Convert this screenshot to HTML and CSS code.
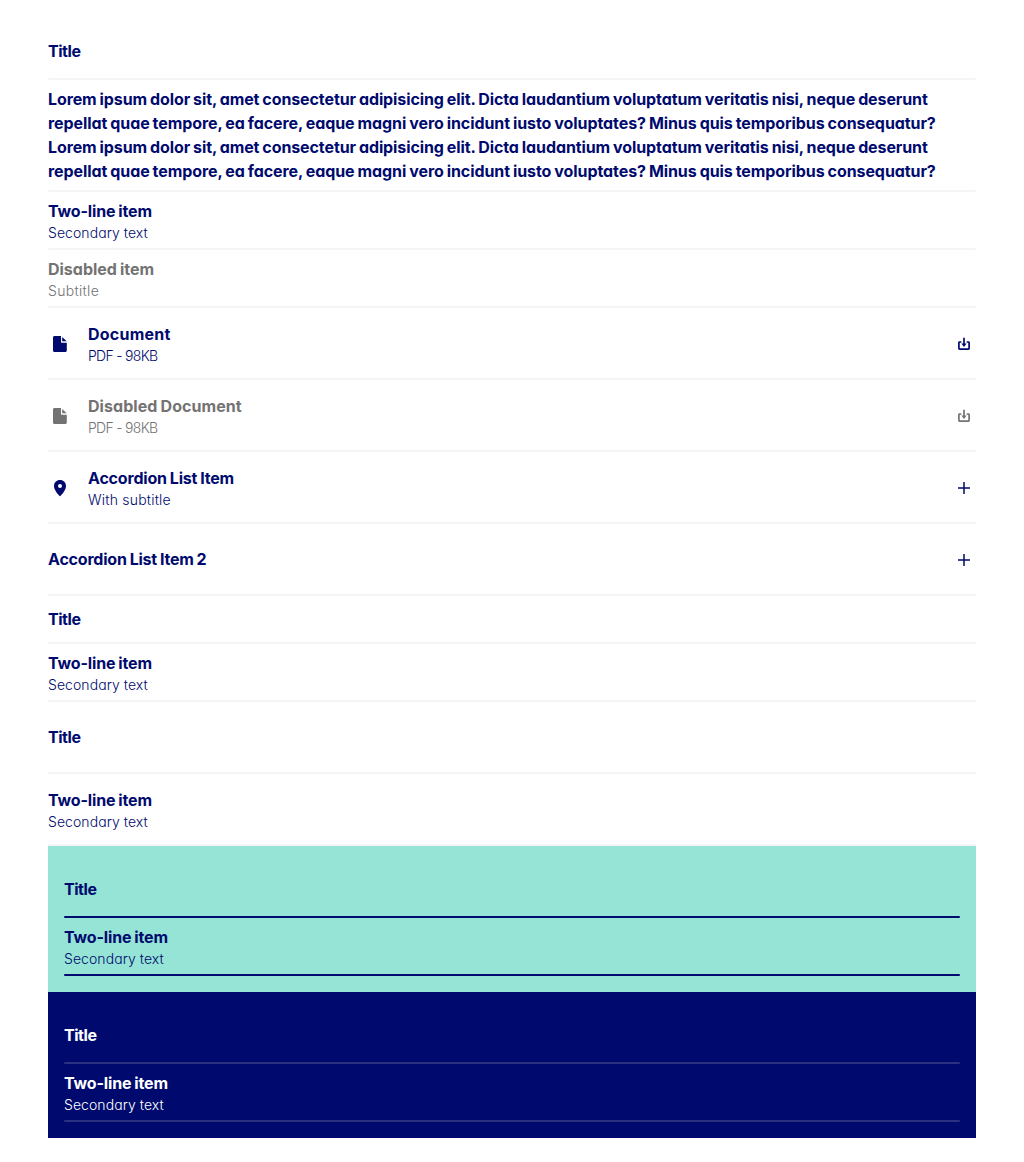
FILE: index.html
```
<!DOCTYPE html>
<html lang="en">
<head>
<meta charset="utf-8">
<title>List</title>
<link rel="stylesheet" href="styles.css">
</head>
<body>
<svg class="sprite" aria-hidden="true">
  <symbol id="file" viewBox="0 0 24 24"><path d="M6.500 4H13v5.700c0 .7.4 1.100 1.100 1.100h4.700v7.700c0 .9-.6 1.500-1.500 1.500H6.500C5.600 20 5 19.400 5 18.500v-13C5 4.600 5.600 4 6.500 4Z"/><path d="M14.200 5v4.300h4.500Z"/></symbol>
  <symbol id="pin" viewBox="0 0 24 24"><path fill-rule="evenodd" d="M12 4c-3.400 0-6 2.600-6 5.900 0 3.700 3.600 8.300 6 10.300 2.400-2 6-6.600 6-10.300C18 6.600 15.400 4 12 4Zm0 4a2 2 0 1 1 0 4 2 2 0 0 1 0-4Z"/></symbol>
  <symbol id="download" viewBox="0 0 24 24"><path class="stroke" d="M8.700 10H7.500q-.6 0-.6.6v6q0 .6.6.6h9q.6 0 .6-.6v-6q0-.6-.6-.6H15.300M12 6.300v6.500"/><path d="M9.400 11.600h5.200L12 15Z"/></symbol>
  <symbol id="plus" viewBox="0 0 24 24"><path d="M11.250 6h1.500v5.250H18v1.500h-5.250V18h-1.500v-5.250H6v-1.500h5.250Z"/></symbol>
</svg>
<main class="page">
  <ul class="list">
    <li class="item medium"><h3 class="t-title">Title</h3></li>
    <li class="item compact"><h3><span class="t-odd">Lorem ipsum dolor sit, amet consectetur adipisicing elit. Dicta laudantium voluptatum veritatis nisi, neque deserunt</span> <span class="t-even">repellat quae tempore, ea facere, eaque magni vero incidunt iusto voluptates? Minus quis temporibus consequatur?</span> <span class="t-odd">Lorem ipsum dolor sit, amet consectetur adipisicing elit. Dicta laudantium voluptatum veritatis nisi, neque deserunt</span> <span class="t-even">repellat quae tempore, ea facere, eaque magni vero incidunt iusto voluptates? Minus quis temporibus consequatur?</span></h3></li>
    <li class="item compact"><div><h3 class="t-two">Two-line item</h3><p>Secondary text</p></div></li>
    <li class="item compact disabled"><div><h3 class="t-dis">Disabled item</h3><p class="t-sub">Subtitle</p></div></li>
    <li class="item tall"><svg class="icon"><use href="#file"/></svg><div class="text"><h3 class="t-doc">Document</h3><p class="t-pdf">PDF - 98KB</p></div><svg class="icon"><use href="#download"/></svg></li>
    <li class="item tall disabled"><svg class="icon"><use href="#file"/></svg><div class="text"><h3 class="t-disdoc">Disabled Document</h3><p class="t-pdf">PDF - 98KB</p></div><svg class="icon"><use href="#download"/></svg></li>
    <li class="item tall"><svg class="icon"><use href="#pin"/></svg><div class="text"><h3 class="t-acc">Accordion List Item</h3><p class="t-with">With subtitle</p></div><svg class="icon"><use href="#plus"/></svg></li>
    <li class="item tall"><div class="text"><h3 class="t-acc2">Accordion List Item 2</h3></div><svg class="icon"><use href="#plus"/></svg></li>
    <li class="item short"><h3 class="t-title">Title</h3></li>
    <li class="item compact"><div><h3 class="t-two">Two-line item</h3><p>Secondary text</p></div></li>
    <li class="item tall"><h3 class="t-title">Title</h3></li>
    <li class="item tall"><div><h3 class="t-two">Two-line item</h3><p>Secondary text</p></div></li>
  </ul>
  <section class="panel mint">
    <ul class="list">
      <li class="item medium"><h3 class="t-title">Title</h3></li>
      <li class="item compact"><div><h3 class="t-two">Two-line item</h3><p>Secondary text</p></div></li>
    </ul>
  </section>
  <section class="panel navy">
    <ul class="list">
      <li class="item medium"><h3 class="t-title">Title</h3></li>
      <li class="item compact"><div><h3 class="t-two">Two-line item</h3><p>Secondary text</p></div></li>
    </ul>
  </section>
</main>
</body>
</html>
```
FILE: styles.css
```
* { box-sizing: border-box; margin: 0; padding: 0; }
body { background: #fff; color: #000a6e; font-family: Inter, "Open Sans", sans-serif; font-feature-settings: "cv11"; }
.sprite { display: none; }
.page { padding: 24px 48px; }
.list { list-style: none; --line: #f5f5f5; }
.item { display: flex; align-items: center; position: relative; }
/* Divider laid over the bottom edge of each row */
.item::after {
  content: "";
  position: absolute;
  left: 0;
  right: 0;
  bottom: 0;
  height: 2px;
  border-radius: 1px;
  background: var(--line);
}
.medium { height: 56px; }
.short { height: 48px; }
.tall { height: 72px; }
.compact { padding: 8px 0; }
.disabled { color: #737373; }
h3 { font-size: 16px; line-height: 24px; font-weight: 700; word-spacing: -0.7px; position: relative; top: -1px; }
p { font-size: 14px; line-height: 18px; font-weight: 300; letter-spacing: 0.07px; }
.text { flex: 1; }
.icon { width: 24px; height: 24px; fill: currentColor; flex: none; }
.icon + .text { margin-left: 16px; }
.stroke { fill: none; stroke: currentColor; stroke-width: 1.7; stroke-linejoin: round; stroke-linecap: round; }
.panel { padding: 16px; }
.mint { background: #95e4d5; }
.mint .list { --line: #000a6e; }
.navy { background: #000a6e; color: #fff; }
.navy .list { --line: #293180; }
.t-odd, .t-even { display: block; white-space: nowrap; }
.t-title { letter-spacing: -0.45px; }
.t-odd { letter-spacing: -0.1px; }
.t-even { letter-spacing: -0.08px; }
.t-two { letter-spacing: -0.14px; }
.t-dis { letter-spacing: -0.01px; }
.t-doc { letter-spacing: 0.226px; }
.t-disdoc { letter-spacing: 0.053px; }
.t-acc { letter-spacing: -0.185px; }
.t-acc2 { letter-spacing: -0.2px; }
.t-sub { letter-spacing: 0.33px; }
.t-pdf { letter-spacing: -0.7px; }
.t-with { letter-spacing: 0.22px; }
```
